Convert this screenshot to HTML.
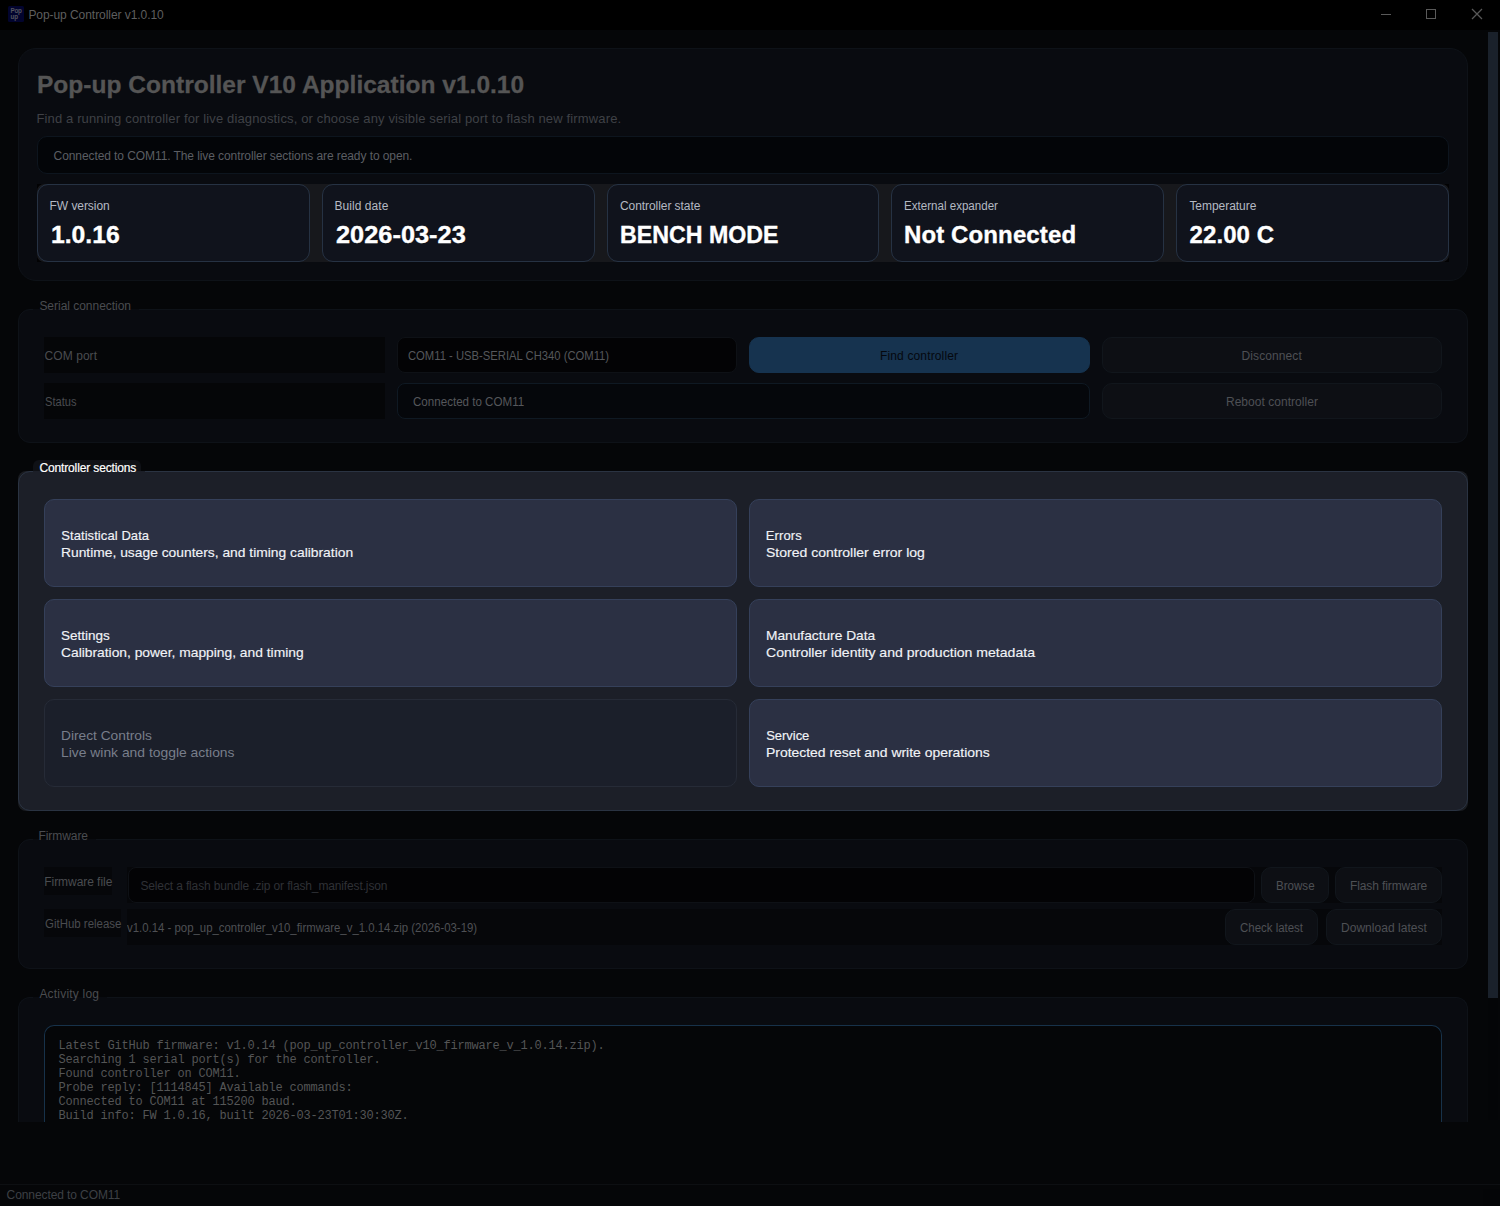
<!DOCTYPE html>
<html lang="en">
<head>
<meta charset="utf-8">
<title>Pop-up Controller v1.0.10</title>
<style>
html,body{margin:0;padding:0;}
body{width:1500px;height:1206px;overflow:hidden;background:#050608;position:relative;font-family:"Liberation Sans", sans-serif;}
.b{position:absolute;box-sizing:border-box;}
.t{position:absolute;white-space:pre;line-height:1;margin:0;}
.m{font-family:"Liberation Mono", monospace;}
</style>
</head>
<body>
<div class="b" style="left:0px;top:0px;width:1500px;height:30px;background:#000000;"></div>
<div class="b" style="left:18px;top:48px;width:1450px;height:233px;background:#090b10;border:1px solid #0e1218;border-radius:18px;"></div>
<div class="b" style="left:37px;top:136px;width:1412px;height:38px;background:#030508;border:1px solid #0d151e;border-radius:10px;"></div>
<div class="b" style="left:37px;top:184px;width:1412px;height:78px;background:#020203;"></div>
<div class="b" style="left:37px;top:184px;width:1412px;height:78px;background:#17181c;border-radius:7px;"></div>
<div class="b" style="left:37px;top:184px;width:273px;height:78px;background:#10131c;border:1px solid #263243;border-radius:11px;"></div>
<div class="b" style="left:322px;top:184px;width:273px;height:78px;background:#10131c;border:1px solid #263243;border-radius:11px;"></div>
<div class="b" style="left:607px;top:184px;width:272px;height:78px;background:#10131c;border:1px solid #263243;border-radius:11px;"></div>
<div class="b" style="left:891px;top:184px;width:273px;height:78px;background:#10131c;border:1px solid #263243;border-radius:11px;"></div>
<div class="b" style="left:1176px;top:184px;width:273px;height:78px;background:#10131c;border:1px solid #263243;border-radius:11px;"></div>
<div class="b" style="left:18px;top:309px;width:1450px;height:134px;background:#090b10;border:1px solid #0e1218;border-radius:12px;"></div>
<div class="b" style="left:33px;top:309px;width:106px;height:1px;background:#090b10;"></div>
<div class="b" style="left:44px;top:337px;width:341px;height:36px;background:#050608;"></div>
<div class="b" style="left:44px;top:383px;width:341px;height:36px;background:#050608;"></div>
<div class="b" style="left:397px;top:337px;width:340px;height:36px;background:#030305;border:1px solid #0e1116;border-radius:8px;"></div>
<div class="b" style="left:749px;top:337px;width:341px;height:36px;background:#16334f;border:1px solid #16334f;border-radius:10px;"></div>
<div class="b" style="left:1102px;top:337px;width:340px;height:36px;background:#0d0f14;border:1px solid #11161c;border-radius:10px;"></div>
<div class="b" style="left:397px;top:383px;width:693px;height:36px;background:#05070b;border:1px solid #0f1923;border-radius:8px;"></div>
<div class="b" style="left:1102px;top:383px;width:340px;height:36px;background:#0d0f14;border:1px solid #11161c;border-radius:10px;"></div>
<div class="b" style="left:18px;top:471px;width:1450px;height:340px;background:#1a1c21;border-radius:8px;"></div>
<div class="b" style="left:18px;top:471px;width:1450px;height:340px;background:#1c1f28;border:1px solid #2a3342;border-radius:12px;"></div>
<div class="b" style="left:33px;top:471px;width:112px;height:1px;background:#1c1f28;"></div>
<div class="b" style="left:33px;top:460px;width:108px;height:11px;background:#0f1116;border-radius:6px 6px 0 0;"></div>
<div class="b" style="left:44px;top:499px;width:693px;height:88px;background:#2b3043;border:1px solid #35405a;border-radius:10px;"></div>
<div class="b" style="left:749px;top:499px;width:693px;height:88px;background:#2b3043;border:1px solid #35405a;border-radius:10px;"></div>
<div class="b" style="left:44px;top:599px;width:693px;height:88px;background:#2b3043;border:1px solid #35405a;border-radius:10px;"></div>
<div class="b" style="left:749px;top:599px;width:693px;height:88px;background:#2b3043;border:1px solid #35405a;border-radius:10px;"></div>
<div class="b" style="left:44px;top:699px;width:693px;height:88px;background:#1b1f2a;border:1px solid #262b37;border-radius:10px;"></div>
<div class="b" style="left:749px;top:699px;width:693px;height:88px;background:#2b3043;border:1px solid #35405a;border-radius:10px;"></div>
<div class="b" style="left:18px;top:839px;width:1450px;height:130px;background:#090b10;border:1px solid #0e1218;border-radius:12px;"></div>
<div class="b" style="left:33px;top:839px;width:63px;height:1px;background:#090b10;"></div>
<div class="b" style="left:127px;top:867px;width:1315px;height:36px;background:#06070a;"></div>
<div class="b" style="left:127px;top:909px;width:1315px;height:36px;background:#06070a;"></div>
<div class="b" style="left:44px;top:867px;width:68px;height:28px;background:#06070a;"></div>
<div class="b" style="left:44px;top:909px;width:77px;height:28px;background:#06070a;"></div>
<div class="b" style="left:128px;top:867px;width:1127px;height:36px;background:#030305;border:1px solid #0e1116;border-radius:8px;"></div>
<div class="b" style="left:1261px;top:867px;width:68px;height:36px;background:#0d0f14;border:1px solid #11161c;border-radius:10px;"></div>
<div class="b" style="left:1335px;top:867px;width:107px;height:36px;background:#0d0f14;border:1px solid #11161c;border-radius:10px;"></div>
<div class="b" style="left:1225px;top:909px;width:93px;height:36px;background:#0d0f14;border:1px solid #11161c;border-radius:10px;"></div>
<div class="b" style="left:1326px;top:909px;width:116px;height:36px;background:#0d0f14;border:1px solid #11161c;border-radius:10px;"></div>
<div class="b" style="left:18px;top:997px;width:1450px;height:125px;background:#090b10;border:1px solid #0e1218;border-radius:12px;border-bottom:none;border-bottom-left-radius:0;border-bottom-right-radius:0;"></div>
<div class="b" style="left:33px;top:997px;width:73.6px;height:1px;background:#090b10;"></div>
<div class="b" style="left:44px;top:1025px;width:1398px;height:97px;background:#050608;border:1px solid #17324a;border-radius:10px;border-bottom:none;border-bottom-left-radius:0;border-bottom-right-radius:0;"></div>
<div class="b" style="left:0px;top:1184px;width:1500px;height:1px;background:#0d0f12;"></div>
<div class="b" style="left:1488px;top:32px;width:10px;height:1088px;background:#040507;"></div>
<div class="b" style="left:1483px;top:1189px;width:17px;height:17px;background:#040507;"></div>
<div class="b" style="left:1488px;top:32px;width:10px;height:966px;background:#1a212b;"></div>
<div class="t" style="left:28.40px;top:8.64px;font-size:12px;color:#5e5e5e;letter-spacing:-0.058px;">Pop-up Controller v1.0.10</div>
<div class="t" style="left:36.98px;top:72.68px;font-size:24px;color:#555555;letter-spacing:0.000px;font-weight:700;transform:scaleX(1.0223);transform-origin:0 0;-webkit-text-stroke:0.3px #555555;">Pop-up Controller V10 Application v1.0.10</div>
<div class="t" style="left:36.40px;top:112.40px;font-size:13px;color:#3f4146;letter-spacing:0.142px;">Find a running controller for live diagnostics, or choose any visible serial port to flash new firmware.</div>
<div class="t" style="left:53.60px;top:149.84px;font-size:12px;color:#5b5e63;letter-spacing:-0.085px;">Connected to COM11. The live controller sections are ready to open.</div>
<div class="t" style="left:49.60px;top:199.84px;font-size:12px;color:#b4b9c2;letter-spacing:-0.067px;">FW version</div>
<div class="t" style="left:50.57px;top:223.28px;font-size:24px;color:#ffffff;letter-spacing:0.000px;font-weight:700;transform:scaleX(1.0303);transform-origin:0 0;-webkit-text-stroke:0.35px #ffffff;">1.0.16</div>
<div class="t" style="left:334.40px;top:199.84px;font-size:12px;color:#b4b9c2;letter-spacing:0.067px;">Build date</div>
<div class="t" style="left:335.60px;top:223.28px;font-size:24px;color:#ffffff;letter-spacing:0.000px;font-weight:700;transform:scaleX(1.0569);transform-origin:0 0;-webkit-text-stroke:0.35px #ffffff;">2026-03-23</div>
<div class="t" style="left:620.00px;top:199.84px;font-size:12px;color:#b4b9c2;letter-spacing:-0.067px;">Controller state</div>
<div class="t" style="left:620.03px;top:223.28px;font-size:24px;color:#ffffff;letter-spacing:0.000px;font-weight:700;transform:scaleX(0.9669);transform-origin:0 0;-webkit-text-stroke:0.35px #ffffff;">BENCH MODE</div>
<div class="t" style="left:904.00px;top:199.84px;font-size:12px;color:#b4b9c2;letter-spacing:0.000px;transform:scaleX(0.9649);transform-origin:0 0;">External expander</div>
<div class="t" style="left:904.00px;top:223.28px;font-size:24px;color:#ffffff;letter-spacing:0.117px;font-weight:700;-webkit-text-stroke:0.35px #ffffff;">Not Connected</div>
<div class="t" style="left:1189.40px;top:199.84px;font-size:12px;color:#b4b9c2;letter-spacing:-0.040px;">Temperature</div>
<div class="t" style="left:1189.60px;top:223.28px;font-size:24px;color:#ffffff;letter-spacing:0.067px;font-weight:700;-webkit-text-stroke:0.35px #ffffff;">22.00 C</div>
<div class="t" style="left:39.40px;top:299.84px;font-size:12px;color:#4a4c50;letter-spacing:-0.025px;">Serial connection</div>
<div class="t" style="left:44.60px;top:349.84px;font-size:12px;color:#4a4c50;letter-spacing:0.057px;">COM port</div>
<div class="t" style="left:44.60px;top:395.84px;font-size:12px;color:#4a4c50;letter-spacing:0.000px;transform:scaleX(0.9235);transform-origin:0 0;">Status</div>
<div class="t" style="left:408.40px;top:349.84px;font-size:12px;color:#55575b;letter-spacing:0.000px;transform:scaleX(0.9374);transform-origin:0 0;">COM11 - USB-SERIAL CH340 (COM11)</div>
<div class="t" style="left:880.00px;top:349.84px;font-size:12px;color:#05080e;letter-spacing:0.143px;">Find controller</div>
<div class="t" style="left:1241.60px;top:349.84px;font-size:12px;color:#4e5054;letter-spacing:0.089px;">Disconnect</div>
<div class="t" style="left:413.00px;top:395.84px;font-size:12px;color:#55575b;letter-spacing:0.000px;transform:scaleX(0.9652);transform-origin:0 0;">Connected to COM11</div>
<div class="t" style="left:1225.96px;top:395.84px;font-size:12px;color:#4e5054;letter-spacing:0.037px;">Reboot controller</div>
<div class="t" style="left:39.40px;top:461.84px;font-size:12px;color:#ffffff;letter-spacing:-0.133px;-webkit-text-stroke:0.2px #ffffff;">Controller sections</div>
<div class="t" style="left:61.20px;top:529.30px;font-size:13px;color:#f1f3f7;letter-spacing:0.080px;-webkit-text-stroke:0.15px #f1f3f7;">Statistical Data</div>
<div class="t" style="left:60.74px;top:546.30px;font-size:13px;color:#f1f3f7;letter-spacing:0.000px;transform:scaleX(1.0637);transform-origin:0 0;-webkit-text-stroke:0.15px #f1f3f7;">Runtime, usage counters, and timing calibration</div>
<div class="t" style="left:765.68px;top:529.30px;font-size:13px;color:#f1f3f7;letter-spacing:0.160px;-webkit-text-stroke:0.15px #f1f3f7;">Errors</div>
<div class="t" style="left:766.20px;top:546.30px;font-size:13px;color:#f1f3f7;letter-spacing:0.000px;transform:scaleX(1.0776);transform-origin:0 0;-webkit-text-stroke:0.15px #f1f3f7;">Stored controller error log</div>
<div class="t" style="left:61.20px;top:629.30px;font-size:13px;color:#f1f3f7;letter-spacing:0.000px;transform:scaleX(1.0383);transform-origin:0 0;-webkit-text-stroke:0.15px #f1f3f7;">Settings</div>
<div class="t" style="left:61.20px;top:646.30px;font-size:13px;color:#f1f3f7;letter-spacing:0.000px;transform:scaleX(1.0623);transform-origin:0 0;-webkit-text-stroke:0.15px #f1f3f7;">Calibration, power, mapping, and timing</div>
<div class="t" style="left:765.74px;top:629.30px;font-size:13px;color:#f1f3f7;letter-spacing:0.000px;transform:scaleX(1.0563);transform-origin:0 0;-webkit-text-stroke:0.15px #f1f3f7;">Manufacture Data</div>
<div class="t" style="left:766.20px;top:646.30px;font-size:13px;color:#f1f3f7;letter-spacing:0.000px;transform:scaleX(1.0819);transform-origin:0 0;-webkit-text-stroke:0.15px #f1f3f7;">Controller identity and production metadata</div>
<div class="t" style="left:60.74px;top:729.30px;font-size:13px;color:#787e8b;letter-spacing:0.000px;transform:scaleX(1.0565);transform-origin:0 0;">Direct Controls</div>
<div class="t" style="left:60.73px;top:746.30px;font-size:13px;color:#787e8b;letter-spacing:0.000px;transform:scaleX(1.0671);transform-origin:0 0;">Live wink and toggle actions</div>
<div class="t" style="left:766.20px;top:729.30px;font-size:13px;color:#f1f3f7;letter-spacing:-0.033px;-webkit-text-stroke:0.15px #f1f3f7;">Service</div>
<div class="t" style="left:765.73px;top:746.30px;font-size:13px;color:#f1f3f7;letter-spacing:0.000px;transform:scaleX(1.0712);transform-origin:0 0;-webkit-text-stroke:0.15px #f1f3f7;">Protected reset and write operations</div>
<div class="t" style="left:38.40px;top:829.84px;font-size:12px;color:#4a4c50;letter-spacing:-0.057px;">Firmware</div>
<div class="t" style="left:44.24px;top:875.84px;font-size:12px;color:#4a4c50;letter-spacing:-0.050px;">Firmware file</div>
<div class="t" style="left:44.60px;top:917.84px;font-size:12px;color:#4a4c50;letter-spacing:0.000px;transform:scaleX(0.9550);transform-origin:0 0;">GitHub release</div>
<div class="t" style="left:140.40px;top:879.84px;font-size:12px;color:#2f3136;letter-spacing:-0.133px;">Select a flash bundle .zip or flash_manifest.json</div>
<div class="t" style="left:127.40px;top:921.84px;font-size:12px;color:#4e5054;letter-spacing:0.000px;transform:scaleX(0.9491);transform-origin:0 0;">v1.0.14 - pop_up_controller_v10_firmware_v_1.0.14.zip (2026-03-19)</div>
<div class="t" style="left:1276.00px;top:879.84px;font-size:12px;color:#4e5054;letter-spacing:0.000px;transform:scaleX(0.9641);transform-origin:0 0;">Browse</div>
<div class="t" style="left:1349.96px;top:879.84px;font-size:12px;color:#4e5054;letter-spacing:-0.108px;">Flash firmware</div>
<div class="t" style="left:1240.00px;top:921.84px;font-size:12px;color:#4e5054;letter-spacing:0.000px;transform:scaleX(0.9545);transform-origin:0 0;">Check latest</div>
<div class="t" style="left:1340.96px;top:921.84px;font-size:12px;color:#4e5054;letter-spacing:0.043px;">Download latest</div>
<div class="t" style="left:39.40px;top:987.84px;font-size:12px;color:#4a4c50;letter-spacing:0.200px;">Activity log</div>
<div class="t m" style="left:58.40px;top:1040.20px;font-size:12px;color:#545556;letter-spacing:-0.200px;">Latest GitHub firmware: v1.0.14 (pop_up_controller_v10_firmware_v_1.0.14.zip).</div>
<div class="t m" style="left:58.40px;top:1054.20px;font-size:12px;color:#545556;letter-spacing:-0.200px;">Searching 1 serial port(s) for the controller.</div>
<div class="t m" style="left:58.40px;top:1068.20px;font-size:12px;color:#545556;letter-spacing:-0.200px;">Found controller on COM11.</div>
<div class="t m" style="left:58.40px;top:1082.20px;font-size:12px;color:#545556;letter-spacing:-0.200px;">Probe reply: [1114845] Available commands:</div>
<div class="t m" style="left:58.40px;top:1096.20px;font-size:12px;color:#545556;letter-spacing:-0.200px;">Connected to COM11 at 115200 baud.</div>
<div class="t m" style="left:58.40px;top:1110.20px;font-size:12px;color:#545556;letter-spacing:-0.200px;">Build info: FW 1.0.16, built 2026-03-23T01:30:30Z.</div>
<div class="t" style="left:6.60px;top:1189.44px;font-size:12px;color:#3d4045;letter-spacing:-0.094px;">Connected to COM11</div>
<div class="b" style="left:0;top:1122px;width:1488px;height:62px;background:#050608;"></div>
<svg class="b" style="left:1370px;top:0;width:130px;height:30px" width="130" height="30" viewBox="0 0 130 30" fill="none" stroke="#5a5a5a" stroke-width="1">
<path d="M11 14.5H21"/><rect x="56.5" y="9.5" width="9" height="9"/><path d="M102 9L112 19M112 9L102 19" stroke="#585858" stroke-width="1.25"/></svg>
<div class="b" style="left:8px;top:6px;width:16px;height:16px;background:#02042e;border-radius:1.5px;"></div>
<div class="t" style="left:10.6px;top:8.4px;font-size:6.3px;line-height:6px;color:#55555f;font-weight:700;letter-spacing:-0.3px;">Pop<br>up</div>
</body>
</html>
